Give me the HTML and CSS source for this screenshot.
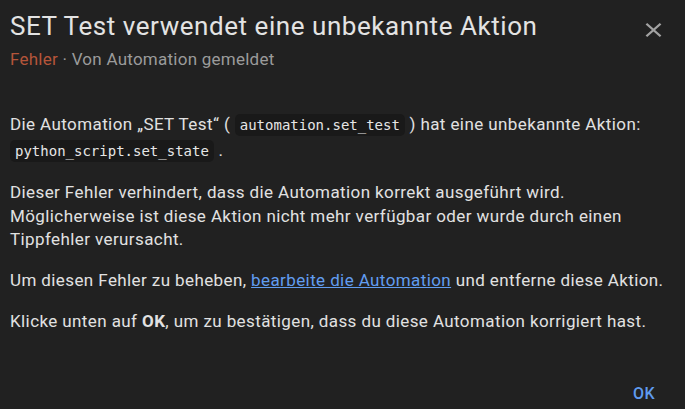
FILE: index.html
```html
<!DOCTYPE html>
<html lang="de">
<head>
<meta charset="utf-8">
<link rel="stylesheet" href="styles.css">
</head>
<body>
<div class="dialog">
  <header class="head">
    <div class="titles">
      <h2 class="title">SET Test verwendet eine unbekannte Aktion</h2>
      <div class="sub"><span class="sev">Fehler</span> · Von Automation gemeldet</div>
    </div>
    <button class="close" aria-label="Schließen">
      <svg width="27" height="24" viewBox="0 0 24 24" preserveAspectRatio="none"><path d="M19,6.41L17.59,5L12,10.59L6.41,5L5,6.41L10.59,12L5,17.59L6.41,19L12,13.41L17.59,19L19,17.59L13.41,12L19,6.41Z" fill="currentColor"/></svg>
    </button>
  </header>
  <div class="content">
    <p class="first">Die Automation „SET Test“ ( <code>automation.set_test</code> ) hat eine unbekannte Aktion: <code>python_script.set_state</code> .</p>
    <p>Dieser Fehler verhindert, dass die Automation korrekt ausgeführt wird. Möglicherweise ist diese Aktion nicht mehr verfügbar oder wurde durch einen Tippfehler verursacht.</p>
    <p>Um diesen Fehler zu beheben, <a href="#">bearbeite die Automation</a> und entferne diese Aktion.</p>
    <p>Klicke unten auf <b>OK</b>, um zu bestätigen, dass du diese Automation korrigiert hast.</p>
  </div>
  <div class="actions">
    <button class="ok">OK</button>
  </div>
</div>
</body>
</html>
```
FILE: styles.css
```css
html, body {
  margin: 0;
  padding: 0;
  background: #212121;
}
body {
  font-family: Roboto, "Liberation Sans", sans-serif;
  color: #e1e1e1;
  width: 685px;
  height: 409px;
  overflow: hidden;
}
.dialog {
  display: flex;
  flex-direction: column;
  height: 409px;
}
.head {
  display: flex;
  justify-content: space-between;
  align-items: flex-start;
  padding: 10px 18px 0 10px;
}
.title {
  margin: 0;
  font-size: 26px;
  font-weight: 400;
  letter-spacing: 0.55px;
  line-height: 32px;
  color: #e3e3e3;
}
.sub {
  font-size: 17px;
  letter-spacing: 0.25px;
  line-height: 24px;
  color: #9b9b9b;
  margin-top: 5px;
}
.sev {
  color: #b5553a;
}
.close {
  background: none;
  border: 0;
  padding: 0;
  margin-top: 8px;
  color: #a2a2a2;
  width: 27px;
  height: 24px;
  display: flex;
}
.content {
  padding: 40px 12px 0 10px;
  font-size: 17px;
  letter-spacing: 0.4px;
  line-height: 23.5px;
}
.content p {
  margin: 0 0 17.5px;
}
.content p.first {
  line-height: 26px;
  margin-bottom: 18px;
}
code {
  font-family: "DejaVu Sans Mono", monospace;
  font-size: 14px;
  letter-spacing: 0;
  line-height: 1;
  background: #191919;
  border-radius: 5px;
  padding: 3px 5px;
  color: #e6e6e6;
}
a {
  color: #619df0;
}
.actions {
  margin-top: auto;
  display: flex;
  justify-content: flex-end;
  padding: 0 30px 5px;
}
.ok {
  background: none;
  border: 0;
  padding: 0;
  font-family: Roboto, sans-serif;
  font-weight: 500;
  font-size: 16px;
  line-height: 20px;
  letter-spacing: 0.4px;
  color: #5f9bef;
}
```
